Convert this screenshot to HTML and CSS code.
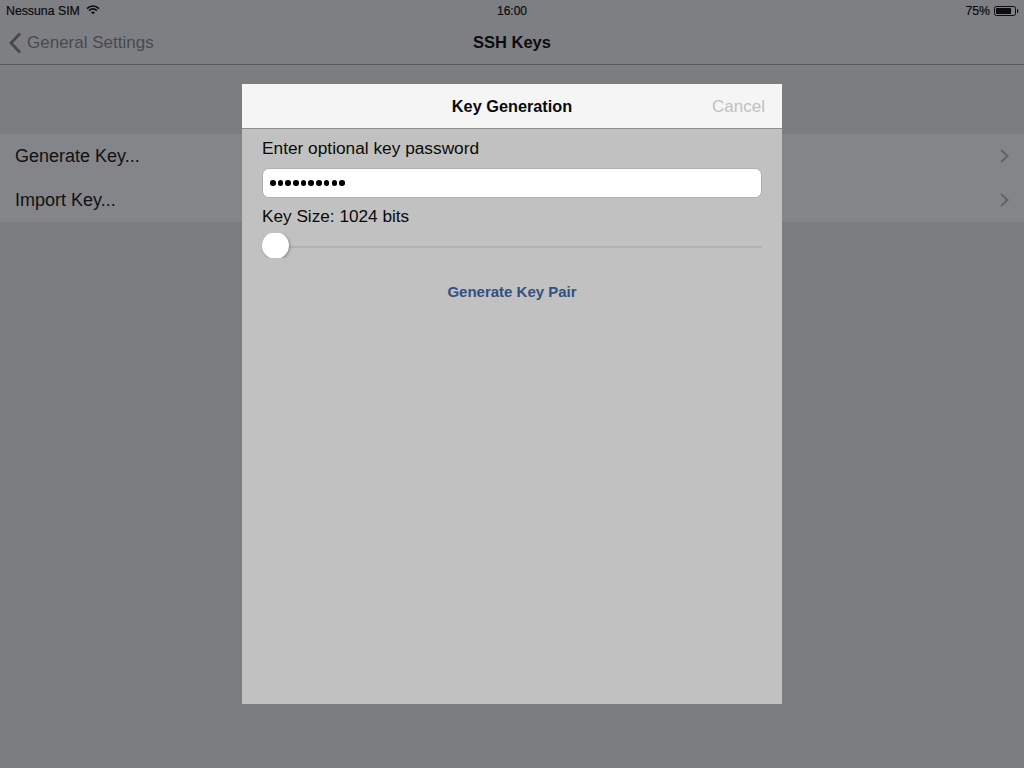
FILE: index.html
```html
<!DOCTYPE html>
<html lang="it">
<head>
<meta charset="utf-8">
<title>SSH Keys</title>
<link rel="stylesheet" href="styles.css">
</head>
<body>
<div class="screen">
  <header class="topbar">
    <div class="status">
      <div class="status-left">
        <span>Nessuna SIM</span>
        <svg class="wifi" width="14" height="10" viewBox="0 0 14 10" aria-hidden="true">
          <path d="M1 3.6C4.6 0.4 9.4 0.4 13 3.6" class="wifi-arc"/>
          <path d="M3.1 5.6C5.5 3.5 8.5 3.5 10.9 5.6" class="wifi-arc"/>
          <path d="M7 9.2 4.9 7.2C6.2 6.200 7.8 6.200 9.1 7.2Z" class="wifi-dot"/>
        </svg>
      </div>
      <div class="status-time">16:00</div>
      <div class="status-right">
        <span>75%</span>
        <svg width="25" height="10" viewBox="0 0 25 10" aria-hidden="true">
          <rect x="0.5" y="0.5" width="21" height="9" rx="2" class="bat-shell"/>
          <rect x="2" y="2" width="15" height="6" rx="0.8" class="bat-fill"/>
          <rect x="23" y="3.2" width="1.2" height="3.6" class="bat-fill"/>
        </svg>
      </div>
    </div>
    <nav class="navbar">
      <div class="back">
        <svg width="14" height="22" viewBox="0 0 14 22" aria-hidden="true">
          <path d="M12 1.500 3 11l9 9.500" class="back-chev"/>
        </svg>
        <span>General Settings</span>
      </div>
      <div class="nav-title">SSH Keys</div>
    </nav>
  </header>
  <ul class="list">
    <li class="row"><span>Generate Key...</span><svg width="10" height="14" viewBox="0 0 10 14" aria-hidden="true"><path d="M2 1 8.500 7 2 13" class="disc"/></svg></li>
    <li class="row"><span>Import Key...</span><svg width="10" height="14" viewBox="0 0 10 14" aria-hidden="true"><path d="M2 1 8.500 7 2 13" class="disc"/></svg></li>
  </ul>
  <section class="modal">
    <div class="modal-head">
      <h1 class="modal-title">Key Generation</h1>
      <span class="cancel">Cancel</span>
    </div>
    <div class="modal-body">
      <label class="label label-first">Enter optional key password</label>
      <div class="input"><span class="dots"><i></i><i></i><i></i><i></i><i></i><i></i><i></i><i></i><i></i><i></i></span></div>
      <label class="label label-size">Key Size: 1024 bits</label>
      <div class="slider"><div class="track"></div><div class="thumb-clip"><div class="thumb"></div></div></div>
      <div class="action">Generate Key Pair</div>
    </div>
  </section>
</div>
</body>
</html>
```
FILE: styles.css
```css
* { box-sizing: border-box; }
html, body { margin: 0; padding: 0; }
body { width: 1024px; height: 768px; overflow: hidden; background: #7c7d81; font-family: "Liberation Sans", Arial, sans-serif; }
.screen { position: relative; width: 1024px; height: 768px; background: #7c7d81; color: #101012; }
.topbar { height: 65px; border-bottom: 1px solid #59595d; background: #7e7f83; }
.status { height: 21px; padding: 1px 6px 0; display: grid; grid-template-columns: 1fr auto 1fr; align-items: center; font-size: 12.300px; line-height: 20px; color: #0c0c0e; -webkit-text-stroke: 0.2px #0c0c0e; }
.status-left { display: flex; align-items: center; gap: 6px; }
.wifi { margin-top: -2px; }
.wifi-arc { fill: none; stroke: #0c0c0e; stroke-width: 1.800; }
.wifi-dot { fill: #0c0c0e; }
.status-time { text-align: center; font-size: 12px; }
.status-right { display: flex; justify-content: flex-end; align-items: center; gap: 4px; font-size: 12.300px; margin-right: -1px; }
.bat-shell { fill: none; stroke: #0c0c0e; stroke-width: 1; }
.bat-fill { fill: #0c0c0e; }
.navbar { position: relative; height: 43px; display: flex; align-items: center; justify-content: center; }
.back { position: absolute; left: 8px; top: 0; height: 43px; display: flex; align-items: center; gap: 5px; color: #48494e; font-size: 17px; }
.back-chev { fill: none; stroke: #48494e; stroke-width: 2.800; }
.nav-title { font-size: 16.500px; font-weight: 700; color: #0c0c0e; }
.list { list-style: none; margin: 69px 0 0; padding: 0; background: #848589; }
.row { height: 44px; padding: 0 15px; display: flex; align-items: center; justify-content: space-between; font-size: 18px; color: #111113; }
.disc { fill: none; stroke: #626367; stroke-width: 2; }
.modal { position: absolute; left: 242px; top: 84px; width: 540px; height: 620px; background: #c1c1c1; }
.modal-head { position: relative; height: 45px; background: #f5f5f5; border-bottom: 1px solid #8e8e8e; display: flex; align-items: center; justify-content: center; padding-top: 1px; }
.modal-title { margin: 0; font-size: 16.300px; font-weight: 700; color: #0a0a0a; }
.cancel { position: absolute; right: 17px; top: 13px; font-size: 17px; color: #c0c0c0; }
.modal-body { padding: 9px 20px 0; }
.label { display: block; font-size: 17.300px; line-height: 20px; color: #0a0a0a; }
.input { margin-top: 10px; height: 30px; background: #fff; border: 1px solid #b0b0b0; border-radius: 7px; display: flex; align-items: center; padding-left: 7px; }
.dots { display: flex; gap: 2.100px; }
.dots i { display: block; width: 5.600px; height: 5.600px; border-radius: 50%; background: #000; }
.label-size { margin-top: 8px; font-size: 17.200px; }
.slider { position: relative; height: 28px; margin-top: 5px; }
.track { position: absolute; left: 0; right: 0; top: 15px; height: 2px; background: #b2b2b2; }
.thumb-clip { position: absolute; left: -2px; top: 2px; width: 34px; height: 25px; overflow: hidden; }
.thumb { position: absolute; left: 2px; top: -1px; width: 27px; height: 27px; border-radius: 50%; background: #fff; box-shadow: 1px 1px 3px rgba(0,0,0,.3); }
.action { margin-top: 24px; text-align: center; font-size: 15px; font-weight: 700; color: #33507f; }
```
